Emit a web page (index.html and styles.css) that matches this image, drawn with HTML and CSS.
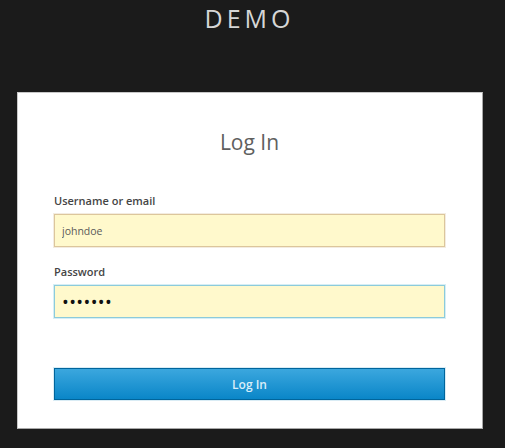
FILE: index.html
```html
<!DOCTYPE html>
<html lang="en">
<head>
<meta charset="utf-8">
<title>DEMO - Log In</title>
<link rel="stylesheet" href="styles.css">
</head>
<body>
<header class="brand">DEMO</header>
<main class="card">
  <h1 class="card-title">Log In</h1>
  <form class="login-form">
    <label class="field-label" for="username">Username or email</label>
    <input class="field-input field-autofill" id="username" type="text" value="johndoe">
    <label class="field-label" for="password">Password</label>
    <input class="field-input field-autofill field-focus" id="password" type="password" value="1234567">
    <button class="submit-btn" type="button">Log In</button>
  </form>
</main>
</body>
</html>
```
FILE: styles.css
```css
html, body {
  margin: 0;
  padding: 0;
}
body {
  background: #1b1b1b;
  font-family: "Open Sans", "Liberation Sans", sans-serif;
  height: 448px;
  overflow: hidden;
}
.brand {
  padding-top: 1px;
  height: 34px;
  line-height: 34px;
  font-size: 25px;
  letter-spacing: 4px;
  color: #d6d6d6;
  text-align: center;
  margin-right: 6px;
}
.card {
  box-sizing: border-box;
  margin: 57px 0 0 17px;
  width: 466px;
  height: 337px;
  background: #fff;
  border: 1px solid #c8c8c8;
  border-right-color: #a8a8a8;
  border-bottom-color: #a8a8a8;
  padding: 34px 37px 0 36px;
}
.card-title {
  margin: 0;
  font-size: 21px;
  font-weight: 400;
  line-height: 30px;
  color: #5f5f5f;
  text-align: center;
}
.login-form {
  display: flex;
  flex-direction: column;
  margin-top: 36px;
}
.field-label {
  font-size: 11px;
  font-weight: 600;
  line-height: 16px;
  color: #454545;
  margin-bottom: 5px;
}
.field-input {
  box-sizing: border-box;
  height: 33px;
  width: 391px;
  margin: 0 0 17px;
  padding: 0 7px;
  font-family: "Open Sans", "Liberation Sans", sans-serif;
  font-size: 10.5px;
  color: #5a5a5a;
  outline: none;
}
.field-autofill {
  background: #fff9cc;
  border: 1px solid #dcc69c;
  box-shadow: 0 0 0 1px #f3ece0;
}
.field-focus {
  border-color: #8ccbdb;
  box-shadow: 0 0 0 1px #d6eef5;
  color: #111;
  letter-spacing: 0.4px;
  font-size: 18px;
}
.submit-btn {
  box-sizing: border-box;
  margin-top: 33px;
  width: 391px;
  height: 32px;
  border: 1px solid #00659c;
  background: linear-gradient(to bottom, #3ba7de 0%, #0a86c8 100%);
  color: #d9eef9;
  font-family: "Open Sans", "Liberation Sans", sans-serif;
  font-size: 12px;
  font-weight: 600;
  box-shadow: 0 0 0 1px #d9ecf5;
  padding: 0;
}
```
